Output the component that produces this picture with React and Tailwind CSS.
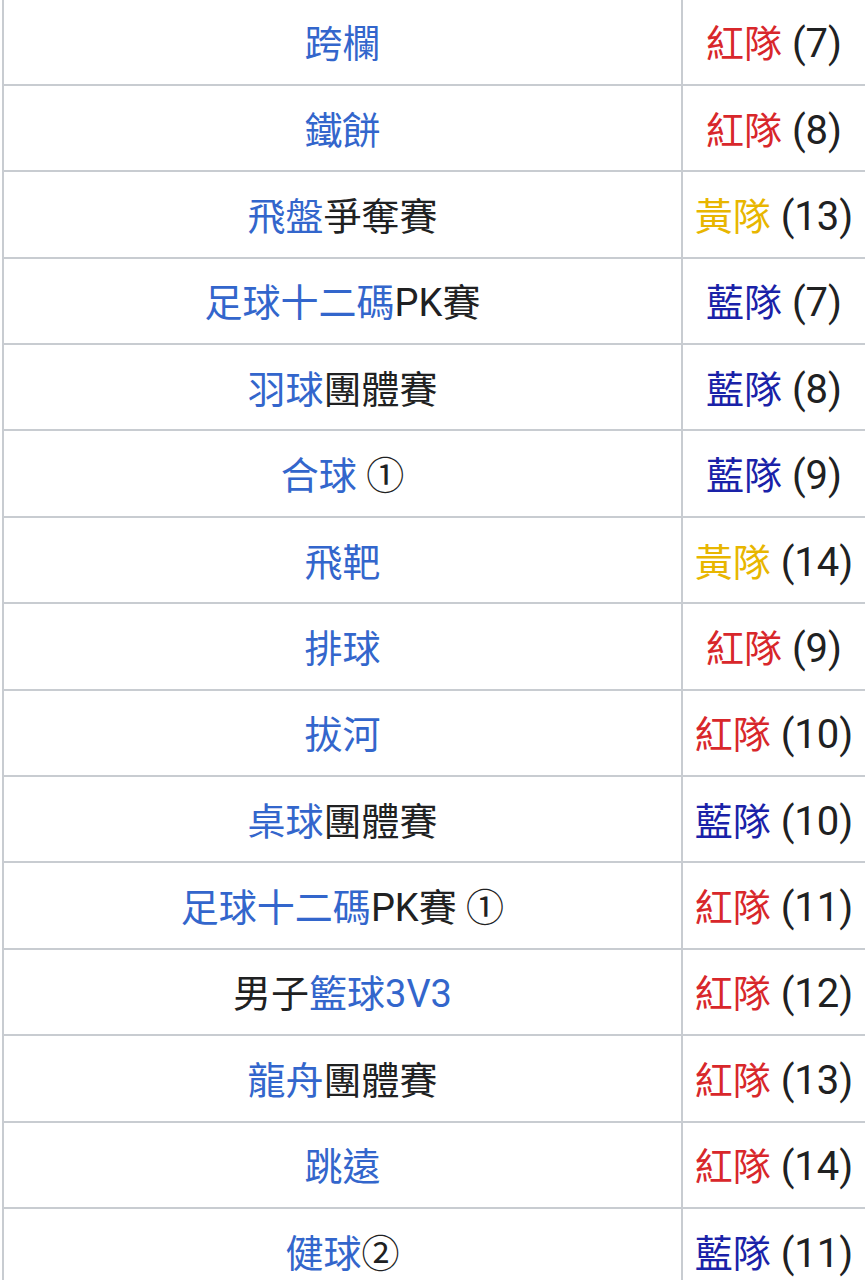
// App.jsx — table of events and winning teams

const LINK = 'text-[#3366cc]'
const TEAM = {
  red: { label: '紅隊', cls: 'text-[#d8272b]' },
  yellow: { label: '黃隊', cls: 'text-[#e8b600]' },
  blue: { label: '藍隊', cls: 'text-[#1a22a8]' },
}

// each event: list of [text, isLink]
const rows = [
  { ev: [['跨欄', 1]], team: 'red', n: 7 },
  { ev: [['鐵餅', 1]], team: 'red', n: 8 },
  { ev: [['飛盤', 1], ['爭奪賽', 0]], team: 'yellow', n: 13 },
  { ev: [['足球十二碼', 1], ['PK賽', 0]], team: 'blue', n: 7 },
  { ev: [['羽球', 1], ['團體賽', 0]], team: 'blue', n: 8 },
  { ev: [['合球', 1], [' ①', 0]], team: 'blue', n: 9 },
  { ev: [['飛靶', 1]], team: 'yellow', n: 14 },
  { ev: [['排球', 1]], team: 'red', n: 9 },
  { ev: [['拔河', 1]], team: 'red', n: 10 },
  { ev: [['桌球', 1], ['團體賽', 0]], team: 'blue', n: 10 },
  { ev: [['足球十二碼', 1], ['PK賽 ①', 0]], team: 'red', n: 11 },
  { ev: [['男子', 0], ['籃球3V3', 1]], team: 'red', n: 12 },
  { ev: [['龍舟', 1], ['團體賽', 0]], team: 'red', n: 13 },
  { ev: [['跳遠', 1]], team: 'red', n: 14 },
  { ev: [['健球', 1], ['②', 0]], team: 'blue', n: 11 },
]

export default function App() {
  return (
    <div
      className="w-[865px] h-[1280px] overflow-hidden bg-white text-[#202122] text-[38px] leading-none"
      style={{ fontFamily: "Roboto, 'Noto Sans CJK TC', 'Noto Sans CJK SC', sans-serif" }}
    >
      <div className="-mt-[0.5px] ml-[2px] w-[880px] border-l-2 border-[#c8ccd1]">
        {rows.map((r, i) => {
          const t = TEAM[r.team]
          return (
            <div key={i} className="flex h-[86.4px] border-b-2 border-[#c8ccd1]">
              <div className="w-[679px] pt-[5px] flex items-center justify-center border-r-2 border-[#c8ccd1] whitespace-pre">
                {r.ev.map(([txt, link], j) => (
                  <span key={j} className={link ? LINK : ''}>{txt}</span>
                ))}
              </div>
              <div className="w-[182px] pt-[5px] flex items-center justify-center whitespace-pre">
                <span className={t.cls}>{t.label}</span>
                <span className="text-[40px]"> ({r.n})</span>
              </div>
            </div>
          )
        })}
      </div>
    </div>
  )
}
